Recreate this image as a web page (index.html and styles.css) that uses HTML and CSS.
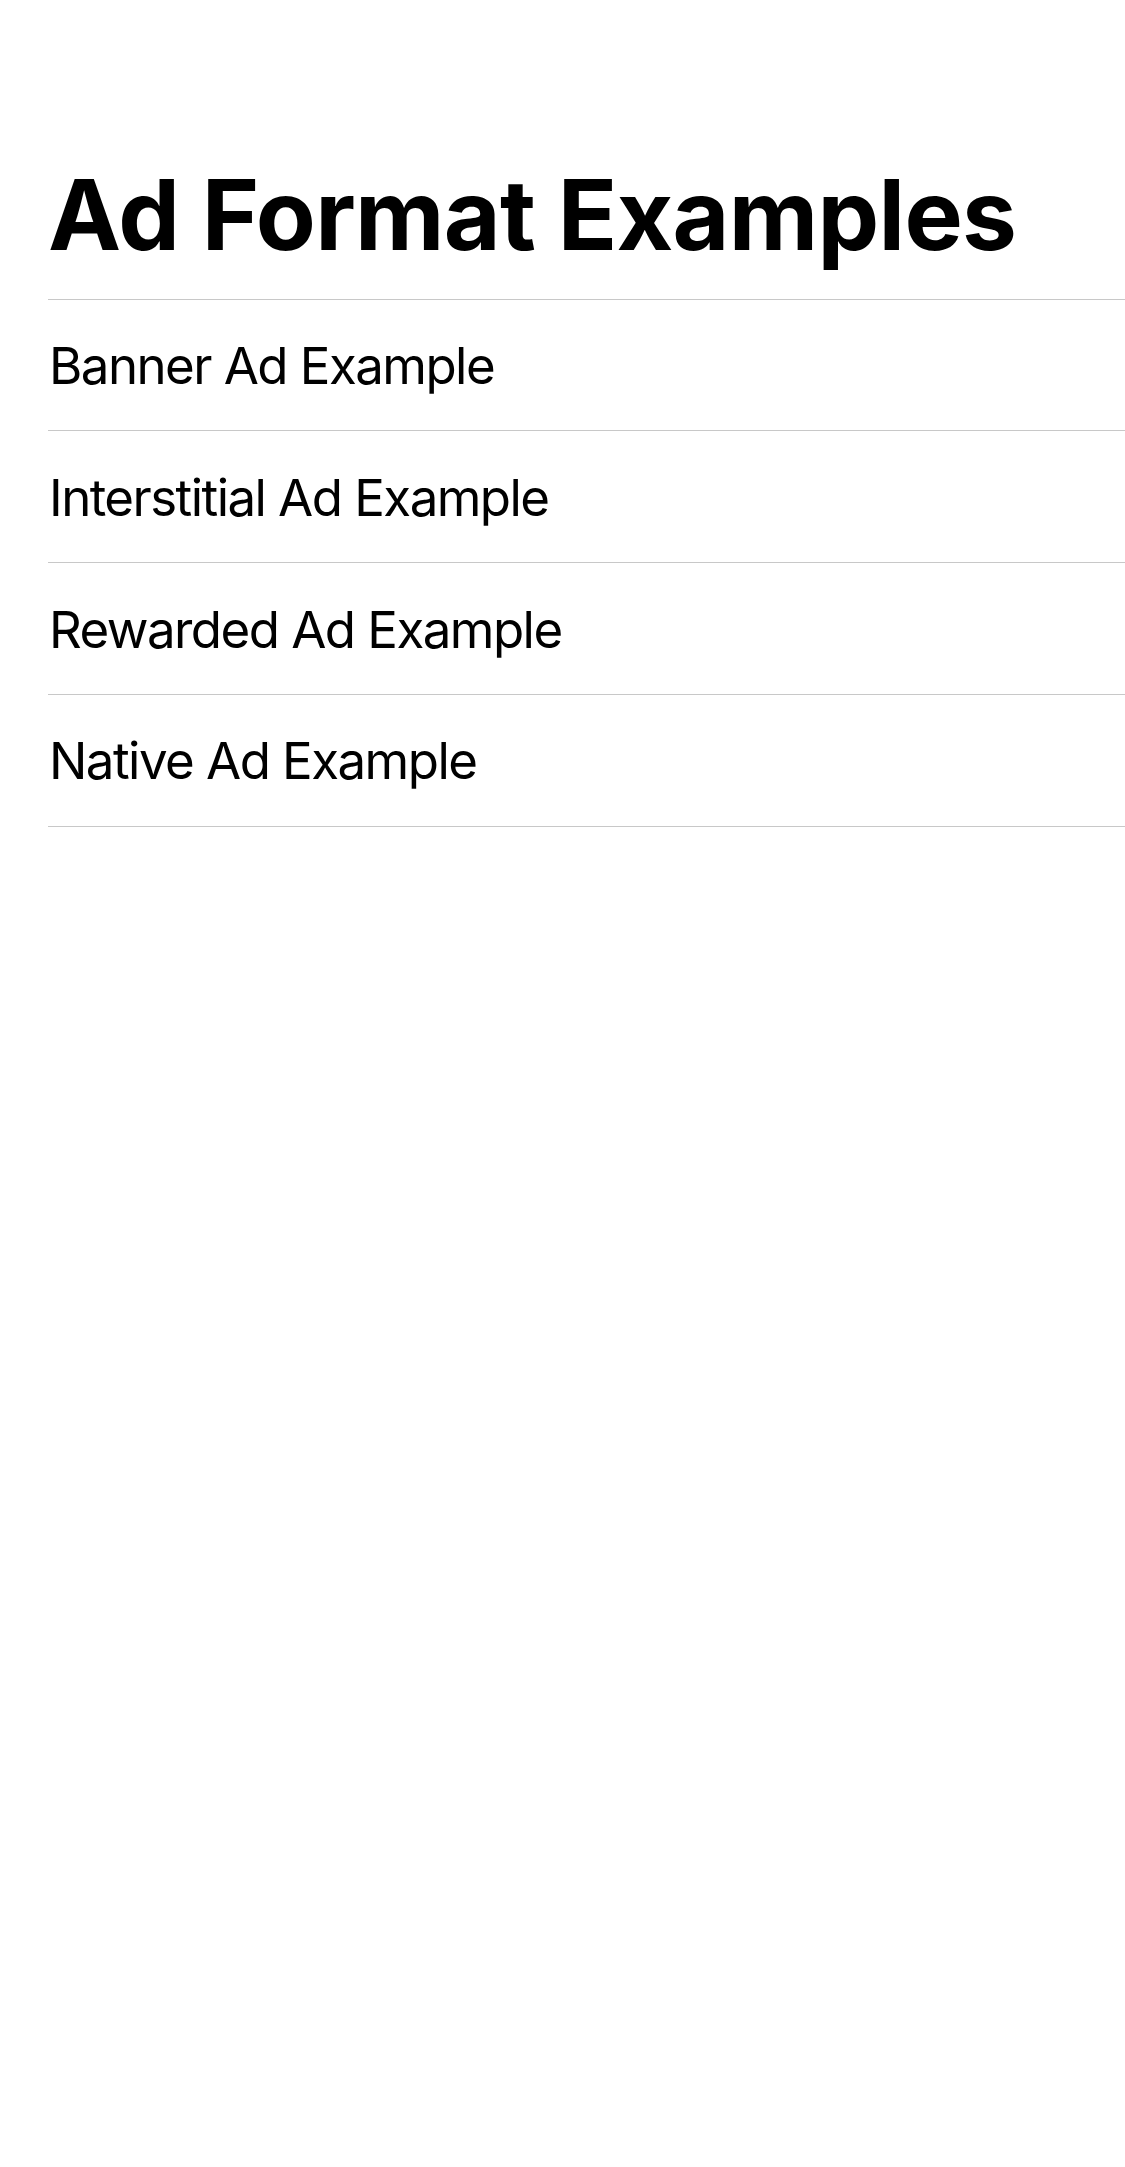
FILE: index.html
```html
<!DOCTYPE html>
<html lang="en">
<head>
<meta charset="utf-8">
<title>Ad Format Examples</title>
<link rel="stylesheet" href="styles.css">
</head>
<body>
<main class="screen">
  <header class="header">
    <h1 class="title">Ad Format Examples</h1>
  </header>
  <ul class="list">
    <li class="row"><span class="row-label">Banner Ad Example</span></li>
    <li class="row"><span class="row-label">Interstitial Ad Example</span></li>
    <li class="row"><span class="row-label">Rewarded Ad Example</span></li>
    <li class="row"><span class="row-label">Native Ad Example</span></li>
  </ul>
</main>
</body>
</html>
```

FILE: styles.css
```css
html, body {
  margin: 0;
  padding: 0;
  background: #ffffff;
}

body {
  font-family: Inter, "Noto Sans", "Liberation Sans", sans-serif;
  color: #000000;
}

.screen {
  width: 1125px;
  min-height: 2167px;
  box-sizing: border-box;
  padding-left: 48px;
}

.header {
  padding-top: 156px;
}

.title {
  margin: 0 0 25px 0;
  font-size: 98px;
  font-weight: 700;
  line-height: 117.6px;
  letter-spacing: -0.7px;
}

.list {
  list-style: none;
  margin: 0;
  padding: 0;
  border-top: 1px solid #c8c8c8;
}

.row {
  height: 130.75px;
  display: flex;
  align-items: center;
  border-bottom: 1px solid #c8c8c8;
}

.row-label {
  font-size: 51px;
  font-weight: 400;
  line-height: 1.21;
  letter-spacing: -1.55px;
  padding-left: 1px;
  padding-top: 2px;
}
```
